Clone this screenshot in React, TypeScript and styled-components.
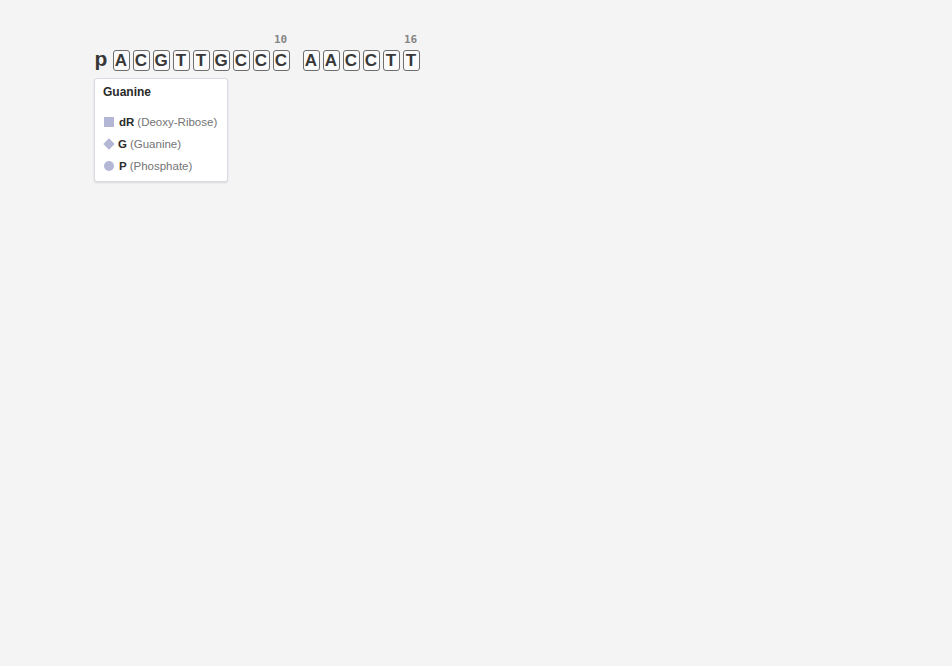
import React from 'react';
import styled, { createGlobalStyle } from 'styled-components';

const GlobalStyle = createGlobalStyle`
    html, body {
        margin: 0;
        padding: 0;
        background: #f4f4f4;
        font-family: "Liberation Sans", Arial, sans-serif;
    }
`;

const Page = styled.div`
    width: 952px;
    height: 666px;
    padding: 33px 0 0 91px;
    box-sizing: border-box;
`;

const Viewer = styled.div`
    position: relative;
    display: inline-block;
`;

const SequenceRow = styled.div`
    display: flex;
    align-items: flex-end;
`;

const Group = styled.div`
    display: flex;
    margin-right: 10px;
`;

const Cell = styled.div`
    width: 20px;
    display: flex;
    flex-direction: column;
    align-items: center;
`;

const Ruler = styled.div`
    height: 14px;
    margin-right: 1px;
    font-family: "DejaVu Sans Mono", "Liberation Mono", monospace;
    font-size: 11px;
    font-weight: bold;
    line-height: 14px;
    color: #858585;
    white-space: nowrap;
`;

const Residue = styled.div<{ $boxed: boolean }>`
    width: 17px;
    height: 21px;
    margin-top: 3px;
    box-sizing: border-box;
    display: flex;
    align-items: center;
    justify-content: center;
    font-weight: bold;
    color: #383838;
    font-size: ${(p) => (p.$boxed ? '17px' : '21px')};
    border: ${(p) => (p.$boxed ? '1px solid #6e6e6e' : '1px solid transparent')};
    border-radius: 3px;
    background: ${(p) => (p.$boxed ? '#fafafa' : 'transparent')};
    line-height: 1;
    padding-bottom: ${(p) => (p.$boxed ? '0' : '4px')};
`;

const Tooltip = styled.div`
    position: absolute;
    left: 3px;
    top: 45px;
    width: 134px;
    height: 104px;
    box-sizing: border-box;
    padding: 6px 8px;
    background: #fff;
    border: 1px solid #d9dde3;
    border-radius: 3px;
    box-shadow: 0 1px 2px rgba(0, 0, 0, 0.12);
`;

const Title = styled.div`
    font-size: 12px;
    font-weight: bold;
    color: #2a2a2a;
    line-height: 14px;
    margin-bottom: 16px;
`;

const Legend = styled.div`
    display: flex;
    flex-direction: column;
    gap: 8px;
`;

const LegendRow = styled.div`
    display: flex;
    align-items: center;
    height: 14px;
    font-size: 11.5px;
    white-space: nowrap;
`;

const Swatch = styled.span<{ $shape: 'square' | 'diamond' | 'circle' }>`
    width: ${(p) => (p.$shape === 'diamond' ? '8px' : '10px')};
    height: ${(p) => (p.$shape === 'diamond' ? '8px' : '10px')};
    margin: ${(p) => (p.$shape === 'diamond' ? '0 5px 0 2px' : '0 5px 0 1px')};
    background: #b3b6d5;
    border-radius: ${(p) => (p.$shape === 'circle' ? '50%' : '0')};
    transform: ${(p) => (p.$shape === 'diamond' ? 'rotate(45deg)' : 'none')};
    flex-shrink: 0;
`;

const Code = styled.b`
    color: #2a2a2a;
    margin-right: 3px;
`;

const Name = styled.span`
    color: #747474;
`;

const groups = [
    ['p', 'A', 'C', 'G', 'T', 'T', 'G', 'C', 'C', 'C'],
    ['A', 'A', 'C', 'C', 'T', 'T'],
];

const legend: { shape: 'square' | 'diamond' | 'circle'; code: string; name: string }[] = [
    { shape: 'square', code: 'dR', name: '(Deoxy-Ribose)' },
    { shape: 'diamond', code: 'G', name: '(Guanine)' },
    { shape: 'circle', code: 'P', name: '(Phosphate)' },
];

const App: React.FC = () => {
    let pos = 0;
    return (
        <Page>
            <GlobalStyle />
            <Viewer>
                <SequenceRow>
                    {groups.map((group, gi) => (
                        <Group key={gi}>
                            {group.map((res, i) => {
                                pos += 1;
                                const label = pos === 10 || pos === 16 ? String(pos) : '';
                                return (
                                    <Cell key={i}>
                                        <Ruler>{label}</Ruler>
                                        <Residue $boxed={res !== 'p'}>{res}</Residue>
                                    </Cell>
                                );
                            })}
                        </Group>
                    ))}
                </SequenceRow>
                <Tooltip>
                    <Title>Guanine</Title>
                    <Legend>
                        {legend.map((item) => (
                            <LegendRow key={item.code}>
                                <Swatch $shape={item.shape} />
                                <Code>{item.code}</Code>
                                <Name>{item.name}</Name>
                            </LegendRow>
                        ))}
                    </Legend>
                </Tooltip>
            </Viewer>
        </Page>
    );
};

export default App;
